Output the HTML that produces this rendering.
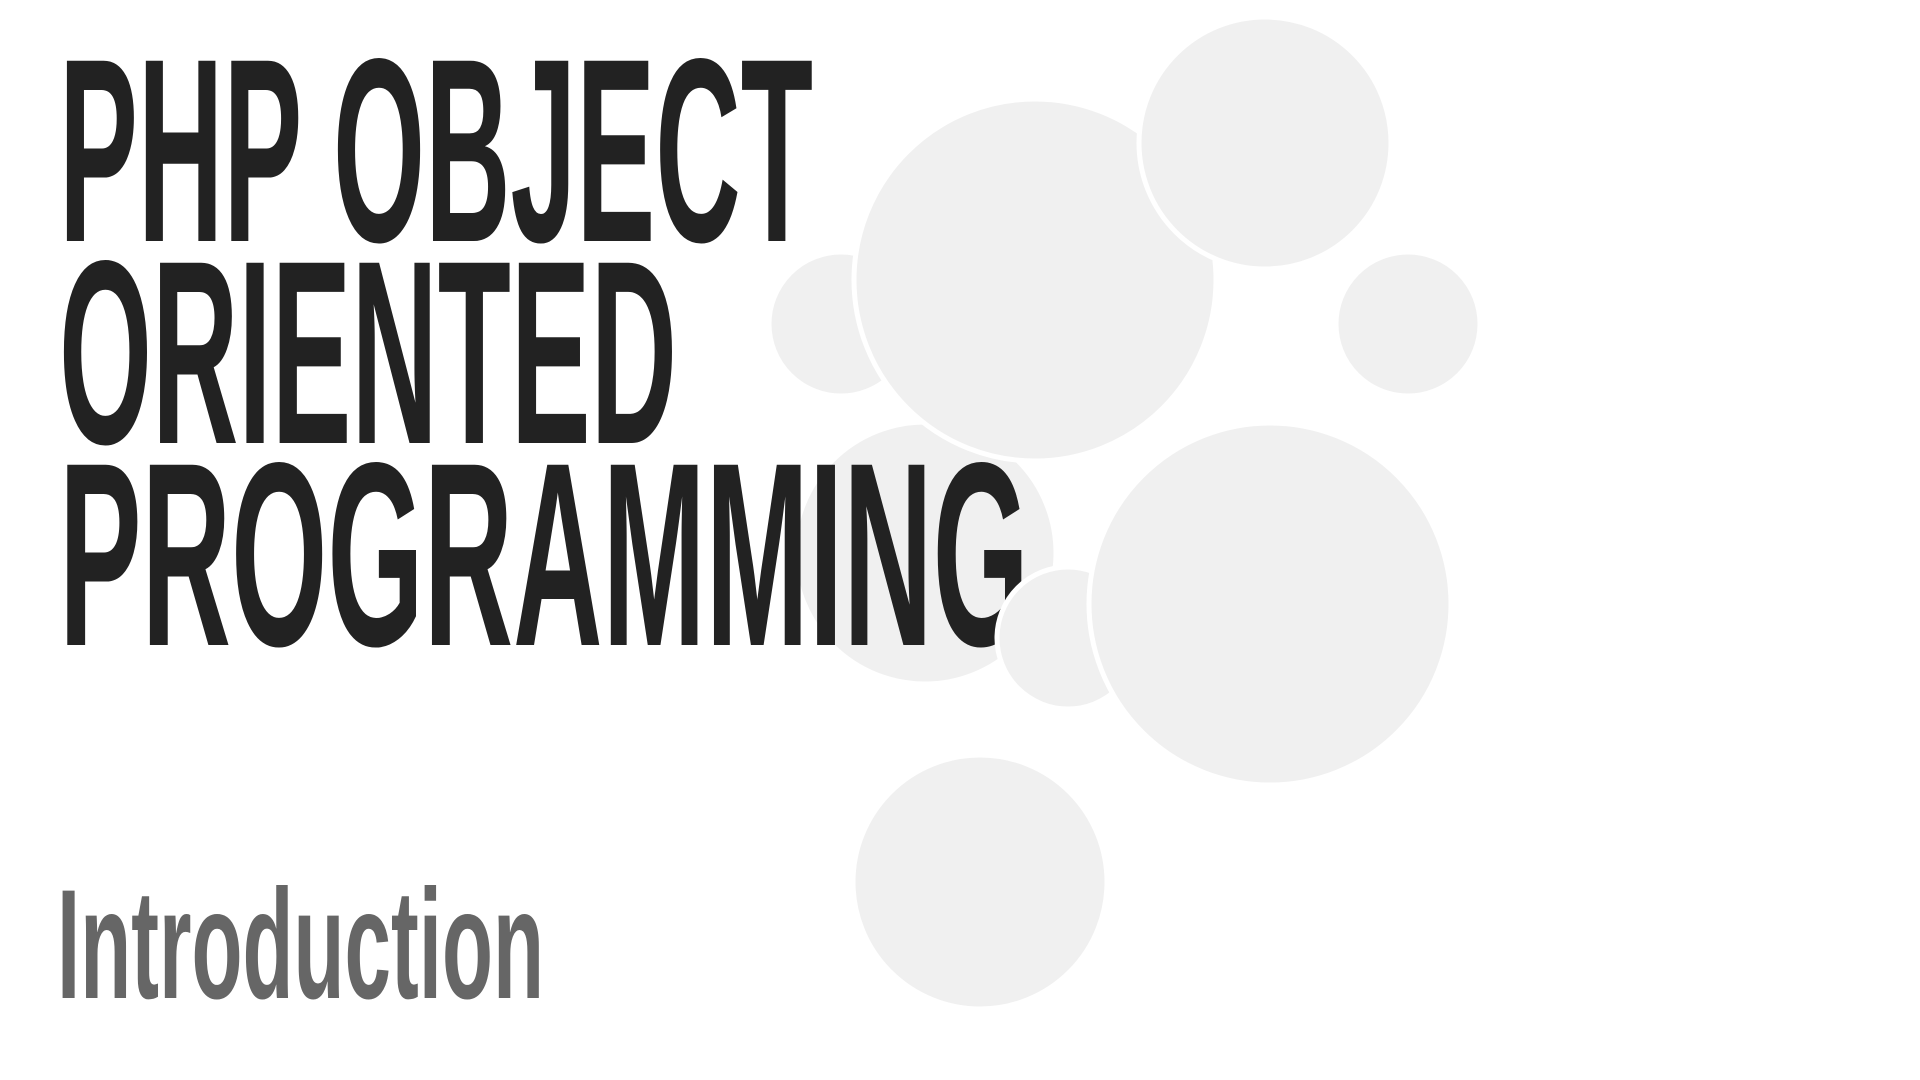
<!DOCTYPE html>
<html><head><meta charset="utf-8"><style>
html,body{margin:0;padding:0;background:#fff;width:1920px;height:1080px;overflow:hidden}
svg{display:block}
text{font-family:"Liberation Sans",sans-serif;font-weight:bold}
</style></head><body>
<svg width="1920" height="1080" viewBox="0 0 1920 1080">
<g fill="#f0f0f0" stroke="#fff" stroke-width="5">
<circle cx="925" cy="553" r="131"/>
<circle cx="841" cy="324" r="72"/>
<circle cx="1035" cy="280" r="181"/>
<circle cx="1265" cy="143" r="126"/>
<circle cx="1408" cy="324" r="72"/>
</g>
<g fill="#222" font-size="262">
<text x="59" y="241" textLength="754" lengthAdjust="spacingAndGlyphs">PHP OBJECT</text>
<text x="59" y="443" textLength="618" lengthAdjust="spacingAndGlyphs">ORIENTED</text>
<text x="59" y="645" textLength="970" lengthAdjust="spacingAndGlyphs">PROGRAMMING</text>
</g>
<g fill="#f0f0f0" stroke="#fff" stroke-width="5">
<circle cx="1068" cy="638" r="71"/>
<circle cx="1270" cy="604" r="181"/>
<circle cx="980" cy="882" r="127"/>
</g>
<text x="57" y="998" font-size="156" fill="#666" textLength="487" lengthAdjust="spacingAndGlyphs">Introduction</text>
</svg>
</body></html>
